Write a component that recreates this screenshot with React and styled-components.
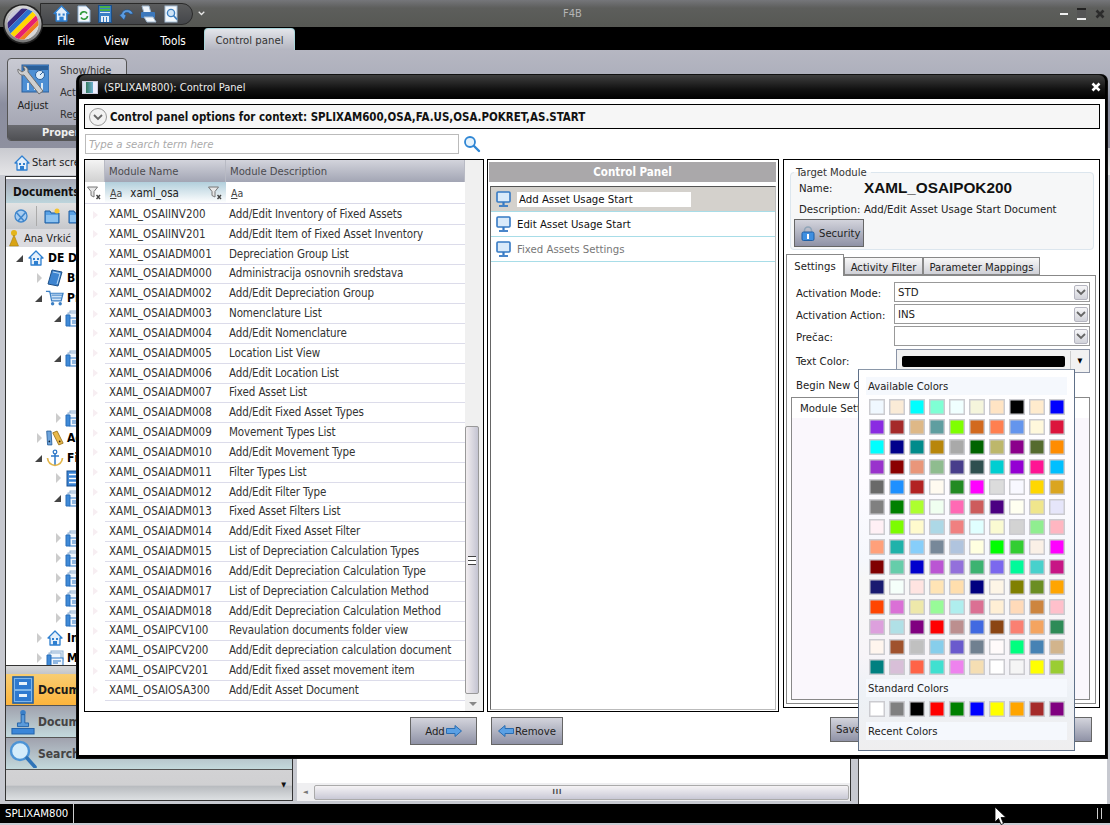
import React from "react";
import styled, { createGlobalStyle } from "styled-components";

const GlobalStyle = createGlobalStyle`
  body {
    margin: 0;
    background: #8e909c;
    font-family: "DejaVu Sans", "Liberation Sans", sans-serif;
    font-stretch: condensed;
    font-size: 11px;
    color: #222;
  }
`;

const MODULES = [
  ["XAML_OSAIINV200", "Add/Edit Inventory of Fixed Assets"],
  ["XAML_OSAIINV201", "Add/Edit Item of Fixed Asset Inventory"],
  ["XAML_OSAIADM001", "Depreciation Group List"],
  ["XAML_OSAIADM000", "Administracija osnovnih sredstava"],
  ["XAML_OSAIADM002", "Add/Edit Depreciation Group"],
  ["XAML_OSAIADM003", "Nomenclature List"],
  ["XAML_OSAIADM004", "Add/Edit Nomenclature"],
  ["XAML_OSAIADM005", "Location List View"],
  ["XAML_OSAIADM006", "Add/Edit Location List"],
  ["XAML_OSAIADM007", "Fixed Asset List"],
  ["XAML_OSAIADM008", "Add/Edit Fixed Asset Types"],
  ["XAML_OSAIADM009", "Movement Types List"],
  ["XAML_OSAIADM010", "Add/Edit Movement Type"],
  ["XAML_OSAIADM011", "Filter Types List"],
  ["XAML_OSAIADM012", "Add/Edit Filter Type"],
  ["XAML_OSAIADM013", "Fixed Asset Filters List"],
  ["XAML_OSAIADM014", "Add/Edit Fixed Asset Filter"],
  ["XAML_OSAIADM015", "List of Depreciation Calculation Types"],
  ["XAML_OSAIADM016", "Add/Edit Depreciation Calculation Type"],
  ["XAML_OSAIADM017", "List of Depreciation Calculation Method"],
  ["XAML_OSAIADM018", "Add/Edit Depreciation Calculation Method"],
  ["XAML_OSAIPCV100", "Revaulation documents folder view"],
  ["XAML_OSAIPCV200", "Add/Edit depreciation calculation document"],
  ["XAML_OSAIPCV201", "Add/Edit fixed asset movement item"],
  ["XAML_OSAIOSA300", "Add/Edit Asset Document"],
];

const AVAILABLE_COLORS = `aliceblue antiquewhite aqua aquamarine azure beige bisque black blanchedalmond blue
blueviolet brown burlywood cadetblue chartreuse chocolate coral cornflowerblue cornsilk crimson
cyan darkblue darkcyan darkgoldenrod darkgray darkgreen darkkhaki darkmagenta darkolivegreen darkorange
darkorchid darkred darksalmon darkseagreen darkslateblue darkslategray darkturquoise darkviolet deeppink deepskyblue
dimgray dodgerblue firebrick floralwhite forestgreen fuchsia gainsboro ghostwhite gold goldenrod
gray green greenyellow honeydew hotpink indianred indigo ivory khaki lavender
lavenderblush lawngreen lemonchiffon lightblue lightcoral lightcyan lightgoldenrodyellow lightgray lightgreen lightpink
lightsalmon lightseagreen lightskyblue lightslategray lightsteelblue lightyellow lime limegreen linen magenta
maroon mediumaquamarine mediumblue mediumorchid mediumpurple mediumseagreen mediumslateblue mediumspringgreen mediumturquoise mediumvioletred
midnightblue mintcream mistyrose moccasin navajowhite navy oldlace olive olivedrab orange
orangered orchid palegoldenrod palegreen paleturquoise palevioletred papayawhip peachpuff peru pink
plum powderblue purple red rosybrown royalblue saddlebrown salmon sandybrown seagreen
seashell sienna silver skyblue slateblue slategray snow springgreen steelblue tan
teal thistle tomato turquoise violet wheat white whitesmoke yellow yellowgreen`.split(/\s+/);

const STANDARD_COLORS = ["white", "gray", "black", "red", "green", "blue", "yellow", "orange", "brown", "purple"];

/* icons */

const Logo = () => (
  <svg width="42" height="42" viewBox="0 0 42 42">
    <defs>
      <clipPath id="logoClip"><circle cx="21" cy="21" r="15.5" /></clipPath>
      <linearGradient id="ring" x1="0" y1="0" x2="0" y2="1">
        <stop offset="0" stopColor="#d8d8d8" /><stop offset="1" stopColor="#777" />
      </linearGradient>
    </defs>
    <circle cx="21" cy="21" r="20" fill="#222" />
    <circle cx="21" cy="21" r="18.5" fill="url(#ring)" />
    <circle cx="21" cy="21" r="15.5" fill="#fff" />
    <g clipPath="url(#logoClip)" transform="rotate(45 21 21)">
      <rect x="3" y="2" width="6" height="38" fill="#c8c8d8" />
      <rect x="9" y="2" width="5" height="38" fill="#3a2a80" />
      <rect x="14" y="2" width="5" height="38" fill="#2b6fd0" />
      <rect x="19" y="2" width="5" height="38" fill="#ffd800" />
      <rect x="24" y="2" width="5" height="38" fill="#e8206e" />
      <rect x="29" y="2" width="4" height="38" fill="#f08020" />
      <rect x="33" y="2" width="6" height="38" fill="#d8d8d8" />
    </g>
  </svg>
);

const HomeIcon = ({ size = 16, base = "#2e7fd0" }) => (
  <svg width={size} height={size} viewBox="0 0 16 16">
    <path d="M8 1 L15 8 L13 8 L13 15 L3 15 L3 8 L1 8 Z" fill="#e4effa" stroke={base} strokeWidth="1.3" strokeLinejoin="round" />
    <rect x="5" y="8" width="2" height="2" fill={base} />
    <rect x="9" y="8" width="2" height="2" fill={base} />
    <rect x="6" y="11" width="4" height="4" fill={base} />
  </svg>
);

const DocRefreshIcon = () => (
  <svg width="16" height="18" viewBox="0 0 16 18">
    <path d="M2 1 H10 L14 5 V17 H2 Z" fill="#f2f7fc" stroke="#8fb0d0" />
    <path d="M4.5 10 A3.5 3.5 0 0 1 11 8.5" fill="none" stroke="#2f9a3c" strokeWidth="1.6" />
    <path d="M11.5 11 A3.5 3.5 0 0 1 5 12.5" fill="none" stroke="#2f9a3c" strokeWidth="1.6" />
  </svg>
);

const SaveIcon = () => (
  <svg width="14" height="18" viewBox="0 0 14 18">
    <rect x="0.5" y="0.5" width="13" height="17" fill="#3b7fc4" stroke="#1d4f86" />
    <rect x="2" y="1" width="10" height="2" fill="#49b04a" />
    <rect x="2" y="4" width="10" height="2" fill="#49b04a" />
    <rect x="2" y="7" width="10" height="1" fill="#dfeaf5" />
    <rect x="3" y="11" width="8" height="6" fill="#e8eef5" />
    <rect x="5" y="12" width="1" height="5" fill="#3b7fc4" />
    <rect x="8" y="12" width="1" height="5" fill="#3b7fc4" />
  </svg>
);

const UndoIcon = () => (
  <svg width="16" height="16" viewBox="0 0 16 16">
    <path d="M6 14 L1.5 9 L3.5 8 A6 6 0 0 1 15 8 L12 8 A3.5 3.5 0 0 0 6 8 L8 9.5 Z" fill="#5b9be0" stroke="#1d4f86" strokeWidth="0.6" />
  </svg>
);

const PrintIcon = () => (
  <svg width="18" height="18" viewBox="0 0 18 18">
    <path d="M2 1 H9 L11 8 H4 Z" fill="#eef4fb" stroke="#a0b8d0" />
    <rect x="1" y="7" width="14" height="6" rx="1" fill="#3c78bc" />
    <path d="M4 12 H13 L16 17 H7 Z" fill="#f3f7fb" stroke="#a0b8d0" />
  </svg>
);

const PreviewIcon = () => (
  <svg width="15" height="18" viewBox="0 0 15 18">
    <rect x="1" y="1" width="12" height="16" fill="#f2f7fc" stroke="#a8c0d8" />
    <circle cx="7" cy="8" r="3.6" fill="#cfe4f7" stroke="#3f80c0" strokeWidth="1.4" />
    <path d="M9.5 10.5 L13 14.5" stroke="#3f80c0" strokeWidth="1.8" />
  </svg>
);

const WindowX = ({ color, size = 10 }) => (
  <svg width={size} height={size} viewBox="0 0 10 10">
    <path d="M1.5 1.5 L8.5 8.5 M8.5 1.5 L1.5 8.5" stroke={color} strokeWidth="2.6" />
  </svg>
);

const AdjustIcon = () => (
  <svg width="32" height="32" viewBox="0 0 32 32">
    <rect x="5" y="1" width="27" height="27" fill="#4d8fd4" stroke="#2a5f9c" />
    <rect x="6" y="2" width="25" height="4" fill="#2b5f98" />
    <circle cx="23" cy="11" r="4.5" fill="#dcebf8" stroke="#2a5f9c" />
    <path d="M23 11 L26 8" stroke="#2a5f9c" />
    <path d="M11 19 V26 M18 19 V26 M25 19 V26" stroke="#dcebf8" strokeWidth="2" />
    <path d="M1 5 A5 5 0 0 0 7 11 L22 30 L26 27 L11 8 A5 5 0 0 0 6 2 L8 6 L5 8 Z" fill="#cfcfcf" stroke="#6f6f6f" />
  </svg>
);

const RefreshGlobe = () => (
  <svg width="16" height="18" viewBox="0 0 16 18">
    <circle cx="8" cy="9" r="6" fill="#a9cdf0" stroke="#3f86cc" strokeWidth="1.3" />
    <path d="M3 5 L11 14 M5 14 L13 5" stroke="#3f86cc" strokeWidth="1.6" />
  </svg>
);

const FolderStar = ({ star = "#f5c431" }) => (
  <svg width="17" height="16" viewBox="0 0 17 16">
    <path d="M1 3 H6 L7 5 H15 V15 H1 Z" fill="#59a2e6" stroke="#1c5a9e" />
    <rect x="2" y="7" width="12" height="7" fill="#8cc2f0" />
    <circle cx="13" cy="3" r="2.5" fill={star} />
  </svg>
);

const PersonIcon = () => (
  <svg width="10" height="17" viewBox="0 0 10 17">
    <circle cx="5" cy="3" r="3" fill="#e4b51c" />
    <path d="M5 5 L9.5 16 L0.5 16 Z" fill="#d9a414" stroke="#9a7409" strokeWidth="0.5" />
  </svg>
);

const BookIcon = () => (
  <svg width="18" height="18" viewBox="0 0 18 18">
    <path d="M6 1 L16 3 L12 17 L2 15 Z" fill="#3d84d0" stroke="#1d4f86" />
    <path d="M7 3 L14 4.5 L11 15" fill="none" stroke="#bcdcf7" />
  </svg>
);

const CartIcon = () => (
  <svg width="20" height="18" viewBox="0 0 20 18">
    <path d="M1 2 H5 L7 12 H17 L19 4 H5" fill="#cfe3f6" stroke="#3b7fc4" strokeWidth="1.3" />
    <path d="M7 6 H18 M7.5 9 H17.5" stroke="#3b7fc4" />
    <circle cx="8" cy="15" r="1.8" fill="#3b7fc4" />
    <circle cx="16" cy="15" r="1.8" fill="#3b7fc4" />
  </svg>
);

const StackIcon = () => (
  <svg width="18" height="17" viewBox="0 0 18 17">
    <rect x="5" y="1" width="12" height="9" fill="#e6eff8" stroke="#8fb0d2" />
    <rect x="3" y="3" width="12" height="9" fill="#f0f6fc" stroke="#8fb0d2" />
    <path d="M1 5 H5 V16 H1 Z" fill="#3f8ad8" stroke="#2b6fb8" />
    <rect x="5" y="8" width="12" height="8" fill="#f2f7fc" stroke="#2e78c8" />
    <path d="M7 11 H15 M7 13 H12" stroke="#2e78c8" />
  </svg>
);

const BindersIcon = () => (
  <svg width="22" height="18" viewBox="0 0 22 18">
    <path d="M2 1 H7 L8 17 H3 Z" fill="#6ea4dc" stroke="#28609c" />
    <path d="M9 3 L14 1 L21 15 L16 17 Z" fill="#e9b94a" stroke="#99721b" />
    <circle cx="5" cy="13" r="1" fill="#123" />
    <circle cx="17" cy="13" r="1" fill="#321" />
  </svg>
);

const AnchorIcon = () => (
  <svg width="18" height="18" viewBox="0 0 18 18">
    <circle cx="9" cy="3" r="1.8" fill="none" stroke="#2e78c8" strokeWidth="1.3" />
    <path d="M9 5 V16 M5 7 H13" stroke="#2e78c8" strokeWidth="1.5" />
    <path d="M1.5 9 C2 14 6 16 9 16.5 C12 16 16 14 16.5 9" fill="none" stroke="#e3b64b" strokeWidth="1.7" />
  </svg>
);

const ListIcon = () => (
  <svg width="16" height="17" viewBox="0 0 16 17">
    <rect x="1" y="1" width="14" height="15" fill="#3b84d4" stroke="#1d5596" />
    <path d="M3 4.5 H13 M3 8.5 H13 M3 12.5 H13" stroke="#fff" strokeWidth="1.6" />
  </svg>
);

const CabinetIcon = () => (
  <svg width="22" height="28" viewBox="0 0 22 28">
    <rect x="1" y="1" width="20" height="26" fill="#7fb6ea" stroke="#1f5fa6" strokeWidth="1.6" />
    <rect x="3" y="3" width="16" height="10" fill="#2f7ad0" />
    <rect x="3" y="15" width="16" height="10" fill="#2f7ad0" />
    <rect x="7" y="6" width="8" height="3" fill="#e8f2fb" />
    <rect x="7" y="18" width="8" height="3" fill="#e8f2fb" />
  </svg>
);

const StampIcon = () => (
  <svg width="24" height="28" viewBox="0 0 26 28">
    <circle cx="13" cy="4" r="3" fill="#3a7fc8" />
    <path d="M11 6 H15 L15 15 H19 V19 H7 V15 H11 Z" fill="#5a9ada" stroke="#1f5fa6" />
    <rect x="1" y="21" width="24" height="6" fill="#3a86d8" stroke="#1f5fa6" />
  </svg>
);

const BigLens = () => (
  <svg width="28" height="28" viewBox="0 0 28 28">
    <circle cx="11" cy="11" r="9" fill="#d4ecfb" stroke="#4d94d6" strokeWidth="2.4" />
    <path d="M18 18 L26 27" stroke="#2f74b8" strokeWidth="3.6" strokeLinecap="round" />
  </svg>
);

const SmallLens = () => (
  <svg width="18" height="18" viewBox="0 0 18 18">
    <circle cx="7" cy="7" r="5" fill="#e6f3fc" stroke="#2f86d4" strokeWidth="1.8" />
    <path d="M11 11 L16 16" stroke="#2f86d4" strokeWidth="2.4" strokeLinecap="round" />
  </svg>
);

const FilterIcon = () => (
  <svg width="14" height="14" viewBox="0 0 14 14">
    <path d="M0.5 1 H10.5 L7 5.5 V11 L4 9.5 V5.5 Z" fill="#e8e8e8" stroke="#777" />
    <path d="M9.5 9 L13 13 M13 9 L9.5 13" stroke="#444" strokeWidth="1.4" />
  </svg>
);

const MonitorIcon = () => (
  <svg width="16" height="17" viewBox="0 0 16 17">
    <rect x="1" y="1" width="13" height="10" rx="1" fill="#d9eafa" stroke="#3579c4" strokeWidth="1.6" />
    <path d="M7.5 11 V14" stroke="#3579c4" strokeWidth="2.2" />
    <path d="M3 15 H12" stroke="#3579c4" strokeWidth="1.8" />
  </svg>
);

const LockIcon = () => (
  <svg width="14" height="15" viewBox="0 0 14 15">
    <path d="M3.5 7 V4.5 A3.5 3.5 0 0 1 10.5 4.5 V7" fill="none" stroke="#8fa4b8" strokeWidth="1.6" />
    <rect x="1" y="6" width="12" height="8.5" rx="1.5" fill="#3f8fe0" stroke="#1f5fa6" />
    <rect x="6" y="8" width="2" height="5" fill="#fff" />
  </svg>
);

const BlueArrow = ({ left }) => (
  <svg width="16" height="12" viewBox="0 0 16 12">
    <path
      d={left ? "M15.5 3.5 H7 V0.5 L0.5 6 L7 11.5 V8.5 H15.5 Z" : "M0.5 3.5 H9 V0.5 L15.5 6 L9 11.5 V8.5 H0.5 Z"}
      fill="#5aa0e4"
      stroke="#2a6cb0"
    />
  </svg>
);

const Chevron = ({ color = "#666", size = 10 }) => (
  <svg width={size} height={size * 0.7} viewBox="0 0 10 7">
    <path d="M1 1 L5 5 L9 1" fill="none" stroke={color} strokeWidth="1.8" />
  </svg>
);

const Cursor = () => (
  <svg width="13" height="20" viewBox="0 0 13 20">
    <path d="M1 1 V16 L4.5 12.5 L7 18.5 L9.5 17.5 L7 11.5 L12 11.5 Z" fill="#fff" stroke="#000" strokeWidth="0.8" />
  </svg>
);

/* shell */

const Page = styled.div`
  position: relative;
  width: 1110px;
  height: 825px;
  overflow: hidden;
  display: flex;
  flex-direction: column;
  background: #c9cbd2;
`;

const TitleBar = styled.div`
  height: 27px;
  flex: none;
  display: flex;
  align-items: center;
  background: linear-gradient(#75767a 0, #5d5e5c 30%, #565853 100%);
  position: relative;
`;

const LogoSlot = styled.div`
  position: absolute;
  left: 2px;
  top: 3px;
  z-index: 2;
  display: flex;
`;

const QuickBar = styled.div`
  margin-left: 40px;
  width: 153px;
  height: 22px;
  box-sizing: border-box;
  padding-left: 12px;
  display: flex;
  align-items: center;
  gap: 6px;
  background: linear-gradient(#5b5c5d, #44464a);
  border: 1px solid #2a2a2a;
  border-radius: 0 12px 12px 0;
`;

const QuickMore = styled.span`
  margin-left: 5px;
  display: flex;
`;

const AppName = styled.div`
  flex: 1;
  text-align: center;
  color: #b5b5b5;
  font-size: 11px;
  padding-right: 120px;
`;

const WindowButtons = styled.div`
  display: flex;
  align-items: center;
  gap: 9px;
  padding-right: 5px;
`;

const MinGlyph = styled.span`
  width: 8px;
  height: 2px;
  background: #f0f0f0;
`;

const MaxGlyph = styled.span`
  width: 9px;
  height: 8px;
  border-top: 2px solid #222;
  border-bottom: 2px solid #eee;
  background: #555;
`;

const MenuStrip = styled.div`
  height: 23px;
  flex: none;
  display: flex;
  align-items: flex-end;
  background: #000;
  padding-left: 42px;
`;

const MenuItem = styled.div`
  width: ${(p) => p.$w}px;
  height: 21px;
  line-height: 24px;
  text-align: center;
  color: #fff;
  font-size: 11.7px;
`;

const ActiveMenuItem = styled.div`
  width: 91px;
  height: 22px;
  margin-left: 1px;
  box-sizing: border-box;
  line-height: 23px;
  text-align: center;
  color: #333;
  font-size: 11.3px;
  border: 1px solid #a8d5da;
  border-bottom: 0;
  border-radius: 4px 4px 0 0;
  background: linear-gradient(#e3e5ea, #b3b5c0);
`;

const Ribbon = styled.div`
  height: 98px;
  flex: none;
  padding: 8px 0 0 7px;
  box-sizing: border-box;
  background: linear-gradient(#b6b7c2 0, #acaebb 30%, #8b8e9f 55%, #8e909f 100%);
`;

const RibbonGroup = styled.div`
  width: 120px;
  height: 83px;
  box-sizing: border-box;
  border: 1px solid #555;
  border-radius: 4px;
  display: flex;
  flex-direction: column;
  overflow: hidden;
  background: linear-gradient(#c9cad3, #9ea0ae);
`;

const RibbonBody = styled.div`
  flex: 1;
  display: flex;
  padding: 3px 0 0 9px;
  gap: 11px;
`;

const AdjustButton = styled.div`
  display: flex;
  flex-direction: column;
  align-items: center;
  gap: 3px;
  padding-top: 2px;
  font-size: 11px;
  color: #222;
`;

const RibbonLinks = styled.div`
  display: flex;
  flex-direction: column;
  gap: 8px;
  padding-top: 2px;
  font-size: 11px;
  line-height: 14px;
  color: #333;
`;

const RibbonLabel = styled.div`
  height: 15px;
  line-height: 15px;
  padding-left: 34px;
  color: #eee;
  font-weight: bold;
  font-size: 11px;
  background: linear-gradient(#6a6b70, #4f5054);
`;

const DocTabs = styled.div`
  height: 27px;
  flex: none;
  display: flex;
  align-items: center;
  padding: 2px 0 0 14px;
  box-sizing: border-box;
  gap: 2px;
  font-size: 11px;
  color: #222;
  background: linear-gradient(#c9cad0, #e5e5e7);
`;

const Workspace = styled.div`
  flex: 1;
  min-height: 0;
  display: flex;
  background: #c7c9d0;
`;

const Dock = styled.div`
  width: 288px;
  margin: 1px 0 3px 5px;
  flex: none;
  display: flex;
  flex-direction: column;
  background: #fff;
  border: 1px solid #333;
  box-sizing: border-box;
`;

const DockHeader = styled.div`
  height: 24px;
  margin-top: 2px;
  padding-left: 7px;
  line-height: 27px;
  flex: none;
  font-weight: bold;
  font-size: 11.7px;
  color: #111;
  background: linear-gradient(#a7a9b6, #bdd5dc);
`;

const DockTools = styled.div`
  height: 26px;
  flex: none;
  display: flex;
  align-items: center;
  padding-left: 7px;
  gap: 7px;
  background: linear-gradient(#e3e3e3, #c6c8cc);
`;

const ToolDivider = styled.span`
  width: 1px;
  height: 20px;
  background: #aaa;
`;

const UserRow = styled.div`
  height: 18px;
  flex: none;
  display: flex;
  align-items: center;
  gap: 5px;
  padding-left: 3px;
  font-size: 11px;
  color: #222;
  background: #dcdce0;
`;

const Tree = styled.div`
  flex: 1;
  padding-top: 1px;
  display: flex;
  flex-direction: column;
  overflow: hidden;
`;

const TreeRowBox = styled.div`
  height: 20px;
  flex: none;
  display: flex;
  align-items: center;
  gap: 3px;
  padding-left: ${(p) => 10 + p.$level * 19}px;
  font-weight: bold;
  font-size: 12px;
  color: #000;
  white-space: nowrap;
`;

const ExpandMark = styled.span`
  width: 0;
  height: 0;
  flex: none;
  border-style: solid;
  ${(p) =>
    p.$open
      ? `border-width: 0 0 7px 7px; border-color: transparent transparent #444 transparent;`
      : `border-width: 5px 0 5px 5px; border-color: transparent transparent transparent #ccc; margin-left: 2px;`}
`;

const IconSlot = styled.span`
  width: 19px;
  flex: none;
  display: flex;
  justify-content: center;
`;

const DockSplitter = styled.div`
  height: 9px;
  flex: none;
  background: linear-gradient(#d8d8d8, #c3c5c9);
  border-top: 1px solid #333;
  box-sizing: border-box;
`;

const NavButton = styled.div`
  height: 32px;
  flex: none;
  display: flex;
  align-items: center;
  gap: 1px;
  padding-left: 3px;
  box-sizing: border-box;
  border-bottom: 1px solid #555;
  font-size: 12px;
  font-weight: bold;
  color: ${(p) => (p.$active ? "#1a1a1a" : "#444")};
  background: ${(p) =>
    p.$active
      ? "linear-gradient(#f8cd72, #fdb43c)"
      : "linear-gradient(#a0a2ae, #c3d9dc)"};
`;

const NavIcon = styled.span`
  width: 28px;
  display: flex;
  justify-content: center;
`;

const DockFooter = styled.div`
  height: 30px;
  flex: none;
  display: flex;
  justify-content: flex-end;
  align-items: center;
  padding-right: 6px;
  font-size: 7px;
  color: #111;
  background: linear-gradient(#d2d2d4 0, #d0d0d2 50%, #b9bcc0 55%, #dde0e2 100%);
`;

const DocArea = styled.div`
  width: 553px;
  margin: 1px 0 3px 4px;
  flex: none;
  display: flex;
  flex-direction: column;
  justify-content: flex-end;
  background: #fff;
  border-right: 1px solid #333;
`;

const HScroll = styled.div`
  height: 18px;
  display: flex;
  align-items: center;
  padding-left: 6px;
  background: #efeff1;
  font-size: 7px;
  color: #777;
`;

const HThumb = styled.div`
  flex: 1;
  margin: 0 1px 0 6px;
  height: 13px;
  padding-right: 48px;
  text-align: center;
  line-height: 13px;
  letter-spacing: 1px;
  font-weight: bold;
  color: #444;
  border: 1px solid #aaa;
  border-radius: 2px;
  background: linear-gradient(#f5f3f5, #c9c9d6);
`;

const SideWhite = styled.div`
  flex: 1;
  margin: 1px 3px 0 7px;
  background: #fff;
  border-left: 1px solid #444;
`;

const StatusBar = styled.div`
  height: 19px;
  flex: none;
  margin-bottom: 2px;
  display: flex;
  align-items: center;
  justify-content: space-between;
  background: #000;
  color: #fff;
  font-size: 11.3px;
`;

const StatusCell = styled.div`
  height: 19px;
  line-height: 19px;
  padding: 0 5px;
  border-right: 1px solid #ccc;
`;

const Grip = styled.div`
  width: 3px;
  height: 11px;
  margin-right: 8px;
  border-left: 1px solid #ccc;
  border-right: 1px solid #ccc;
`;

const CursorSlot = styled.div`
  position: absolute;
  left: 994px;
  top: 806px;
  z-index: 9;
  display: flex;
`;

/* modal */

const Modal = styled.div`
  position: absolute;
  left: 77px;
  top: 75px;
  width: 1030px;
  height: 683px;
  box-sizing: border-box;
  padding: 0 2px 3px;
  display: flex;
  flex-direction: column;
  border-radius: 6px 6px 0 0;
  background: #000;
  box-shadow: 0 0 0 1px #111;
`;

const ModalTitle = styled.div`
  height: 24px;
  flex: none;
  display: flex;
  align-items: center;
  gap: 6px;
  padding: 0 4px 0 3px;
  color: #eee;
  font-size: 11px;
  border-radius: 6px 6px 0 0;
  background: linear-gradient(#3f3f3f, #111 60%, #000);
`;

const TitleGlyph = styled.span`
  width: 14px;
  height: 11px;
  background: linear-gradient(90deg, #d8e4f0 20%, #33785c 20%, #6fb0d0 70%, #eef 70%);
  border: 1px solid #ccd;
`;

const ModalClose = styled.span`
  margin-left: auto;
  display: flex;
`;

const ModalBody = styled.div`
  position: relative;
  flex: 1;
  min-height: 0;
  display: flex;
  flex-direction: column;
  padding: 5px 5px 0;
  background: #fff;
`;

const ContextBar = styled.div`
  height: 25px;
  flex: none;
  box-sizing: border-box;
  display: flex;
  align-items: center;
  gap: 3px;
  padding: 1px 0 0 4px;
  border: 1px solid #000;
  background: #f6f6f6;
  font-weight: bold;
  font-size: 11.45px;
  color: #111;
`;

const RoundToggle = styled.span`
  width: 18px;
  height: 18px;
  box-sizing: border-box;
  display: flex;
  align-items: center;
  justify-content: center;
  border: 1px solid #999;
  border-radius: 50%;
  background: #f2f2f2;
`;

const SearchRow = styled.div`
  height: 20px;
  flex: none;
  margin: 5px 0;
  display: flex;
  align-items: center;
  gap: 4px;
`;

const SearchInput = styled.div`
  width: 374px;
  height: 20px;
  margin-left: 1px;
  box-sizing: border-box;
  padding-left: 3px;
  line-height: 19px;
  border: 1px solid #bbb;
  color: #aaa;
  font-style: italic;
  font-size: 11.3px;
`;

const Panels = styled.div`
  height: 553px;
  flex: none;
  display: flex;
  align-items: flex-start;
  gap: 3px;
`;

const ModulePanel = styled.div`
  width: 400px;
  height: 553px;
  box-sizing: border-box;
  border: 1px solid #000;
  display: flex;
`;

const GridColumn = styled.div`
  flex: 1;
  min-width: 0;
  display: flex;
  flex-direction: column;
`;

const GridHeader = styled.div`
  display: grid;
  grid-template-columns: 20px 121px 1fr;
  height: 22px;
  flex: none;
  color: #4b4b4f;
  font-size: 11.2px;
`;

const HeaderCell = styled.div`
  padding-left: 4px;
  line-height: 23px;
  border-right: 1px solid #b8bac4;
  background: ${(p) =>
    p.$blank
      ? "linear-gradient(#f4f4f4, #cfcfcf)"
      : "linear-gradient(#d3d4dc, #a0a3b2)"};
`;

const FilterRow = styled.div`
  display: grid;
  grid-template-columns: 20px 121px 1fr;
  height: 22px;
  flex: none;
  border-bottom: 1px solid #d9d9e8;
  box-sizing: border-box;
`;

const FilterCell = styled.div`
  display: flex;
  align-items: center;
  gap: 8px;
  padding-left: ${(p) => p.$pad}px;
  color: #222;
  font-size: 11.5px;
  background: ${(p) => (p.$tinted ? "linear-gradient(#b2cfdc, #fff)" : "#fff")};
`;

const FilterAa = styled.span`
  font-size: 10.5px;
  color: #444;
  &::first-letter {
    text-decoration: underline;
  }
`;

const PushRight = styled.span`
  margin-left: auto;
  margin-right: 4px;
  display: flex;
`;

const GridRow = styled.div`
  display: grid;
  grid-template-columns: 20px 121px 1fr;
  height: 19.83px;
  flex: none;
  font-size: 11.5px;
  color: #333;
`;

const RowMarker = styled.div`
  display: flex;
  align-items: center;
  padding-left: 8px;
  &::before {
    content: "";
    border-style: solid;
    border-width: 4px 0 4px 5px;
    border-color: transparent transparent transparent #f7eef2;
  }
`;

const RowCell = styled.div`
  line-height: 20px;
  white-space: nowrap;
  border-bottom: 1px solid #dcdcea;
  padding-left: ${(p) => p.$pad}px;
  letter-spacing: ${(p) => p.$track || 0}px;
`;

const VScroll = styled.div`
  width: 18px;
  flex: none;
  display: flex;
  flex-direction: column;
  align-items: flex-start;
  justify-content: flex-end;
  background: #f0f0f0;
  padding-bottom: 17px;
  box-sizing: border-box;
  position: relative;
`;

const VThumb = styled.div`
  width: 14px;
  height: 268px;
  display: flex;
  align-items: center;
  justify-content: center;
  box-sizing: border-box;
  border: 1px solid #999;
  border-radius: 2px;
  background: linear-gradient(90deg, #f2eef0, #c4c4d2);
`;

const GripLines = styled.span`
  width: 8px;
  height: 7px;
  border-top: 1px solid #444;
  border-bottom: 1px solid #444;
  background: linear-gradient(#fff 40%, #444 40%, #444 60%, #fff 60%);
`;

const ScrollDown = styled.span`
  position: absolute;
  left: 4px;
  bottom: 5px;
  width: 0;
  height: 0;
  border-style: solid;
  border-width: 4px 4px 0 4px;
  border-color: #888 transparent transparent transparent;
`;

const MiddlePanel = styled.div`
  width: 292px;
  height: 553px;
  box-sizing: border-box;
  border: 1px solid #000;
  padding: 2px 2px 1px 1px;
  display: flex;
  flex-direction: column;
`;

const MiddleTitle = styled.div`
  height: 20px;
  flex: none;
  line-height: 20px;
  text-align: center;
  font-weight: bold;
  font-size: 11.5px;
  color: #fff;
  background: #aaa8aa;
`;

const ActionList = styled.div`
  flex: 1;
  margin: 4px 0 0 1px;
  border-left: 1px solid #666;
  border-top: 1px solid #555;
  border-right: 1px solid #bbb;
  border-bottom: 1px solid #bbb;
`;

const ActionRow = styled.div`
  height: 24.9px;
  box-sizing: border-box;
  display: flex;
  align-items: center;
  gap: 5px;
  padding: 1px 0 0 5px;
  font-size: 11.3px;
  border-bottom: 1px solid #a8dde8;
  color: ${(p) => (p.$muted ? "#777" : "#111")};
  background: ${(p) => (p.$selected ? "#d4d1cc" : "#fff")};
`;

const ActionEdit = styled.div`
  width: 174px;
  height: 15px;
  line-height: 15px;
  padding-left: 2px;
  background: #fff;
  box-sizing: border-box;
`;

const TargetPanel = styled.div`
  width: 317px;
  height: 549px;
  margin-left: 1px;
  box-sizing: border-box;
  border: 1px solid #000;
  padding: 6px 3px 3px 2px;
  display: flex;
  flex-direction: column;
`;

const TargetBox = styled.fieldset`
  margin: 0 2px 0 4px;
  padding: 0 4px 0 3px;
  height: 84px;
  box-sizing: border-box;
  flex: none;
  min-width: 0;
  border: 1px solid #dce6ee;
  border-radius: 4px;
  background: #f6f7f8;
  font-size: 11.3px;
  color: #222;
`;

const Legend = styled.legend`
  padding: 0 4px 0 2px;
  font-size: 11.2px;
  color: #333;
`;

const NameRow = styled.div`
  display: flex;
  align-items: center;
  height: ${(p) => p.$h}px;
  padding-left: 5px;
  white-space: nowrap;
`;

const NameLabel = styled.span`
  width: 65px;
  flex: none;
`;

const NameValue = styled.span`
  font-family: "Liberation Sans", sans-serif;
  font-size: 15.3px;
  font-weight: bold;
  color: #111;
`;

const SecurityButton = styled.div`
  width: 70px;
  height: 28px;
  margin-top: -2px;
  box-sizing: border-box;
  display: flex;
  align-items: center;
  gap: 4px;
  padding-left: 6px;
  font-size: 11.2px;
  border: 1px solid #666;
  background: linear-gradient(#d3d4dc, #8f92a6);
`;

const TabStrip = styled.div`
  display: flex;
  align-items: flex-end;
  height: 22px;
  flex: none;
  margin-top: 3px;
  position: relative;
  z-index: 1;
`;

const Tab = styled.div`
  height: ${(p) => (p.$active ? 22 : 18)}px;
  line-height: ${(p) => (p.$active ? 23 : 19)}px;
  width: ${(p) => p.$w}px;
  margin-bottom: ${(p) => (p.$active ? -1 : 0)}px;
  box-sizing: border-box;
  text-align: center;
  font-size: 11.2px;
  color: #222;
  border: 1px solid #888;
  border-bottom: ${(p) => (p.$active ? "0" : "1px solid #888")};
  background: ${(p) => (p.$active ? "#fff" : "linear-gradient(#f8f8f8, #cfd0d6)")};
`;

const TabPanel = styled.div`
  flex: 1;
  min-height: 0;
  box-sizing: border-box;
  padding: 6px 5px 3px 4px;
  border: 1px solid #888;
  display: flex;
  flex-direction: column;
`;

const FieldGrid = styled.div`
  display: grid;
  grid-template-columns: 98px 1fr;
  row-gap: 2px;
  padding-left: 5px;
  font-size: 11.3px;
  color: #222;
  align-items: center;
`;

const FieldLabel = styled.span`
  padding-top: 2px;
`;

const ComboBox = styled.div`
  height: 20px;
  box-sizing: border-box;
  display: flex;
  align-items: center;
  padding: 1px 1px 0 3px;
  border: 1px solid #999;
  background: #fff;
`;

const ComboArrow = styled.span`
  width: 14px;
  height: 15px;
  margin-left: auto;
  display: flex;
  align-items: center;
  justify-content: center;
  box-sizing: border-box;
  border: 1px solid #b5b5c0;
  border-radius: 2px;
  background: linear-gradient(#f6f6f8, #d2d3da);
`;

const ColorPick = styled.div`
  height: 24px;
  margin: 1px 0 0 2px;
  box-sizing: border-box;
  display: flex;
  align-items: center;
  padding-left: 5px;
  border: 1px solid #8a93a6;
  background: #f2f2f2;
`;

const ColorSwatchBar = styled.span`
  flex: 1;
  height: 11px;
  background: ${(p) => p.$color};
  border-radius: 2px;
`;

const ColorDrop = styled.span`
  width: 18px;
  text-align: center;
  font-size: 7px;
  color: #000;
  margin-left: 5px;
  border-left: 1px solid #ccc;
  line-height: 20px;
`;

const SpanRow = styled.div`
  height: 24px;
  line-height: 25px;
  padding-left: 5px;
  font-size: 11.3px;
  color: #222;
  flex: none;
`;

const SettingsGroup = styled.div`
  flex: 1;
  box-sizing: border-box;
  border: 1px solid #888;
  padding: 4px 8px;
  font-size: 11.3px;
  background: linear-gradient(#fff 20px, #faf7fc 20px);
  color: #222;
`;

const ModalButtons = styled.div`
  height: 28px;
  flex: none;
  margin-top: 5px;
  display: flex;
  align-items: flex-start;
  padding-left: 326px;
`;

const ActionButton = styled.div`
  width: ${(p) => p.$w}px;
  height: ${(p) => p.$h}px;
  margin-left: ${(p) => p.$gap}px;
  box-sizing: border-box;
  display: flex;
  align-items: center;
  justify-content: ${(p) => (p.$start ? "flex-start" : "center")};
  padding-left: ${(p) => (p.$start ? 5 : 0)}px;
  gap: 1px;
  font-size: 11.3px;
  color: #222;
  border: 1px solid #666;
  background: linear-gradient(#d3d4dc, #8f92a6);
`;

/* colour popup */

const ColorPopup = styled.div`
  position: absolute;
  left: 779px;
  top: 270px;
  width: 217px;
  height: 382px;
  box-sizing: border-box;
  padding: 7px 7px 0;
  z-index: 5;
  border: 1px solid #5f7088;
  border-top-color: #8a97a8;
  background: linear-gradient(#fff 0, #fdfbff 30%, #f5f7fc 50%, #f7f7f7 55%, #f7f4f8 75%, #edf1f6 85%, #efeeef 100%);
`;

const PopupHeading = styled.div`
  height: 18px;
  margin-top: ${(p) => p.$mt || 0}px;
  line-height: 19px;
  padding-left: 2px;
  font-size: 11.2px;
  color: #222;
  background: #f5f8fd;
`;

const SwatchGrid = styled.div`
  display: grid;
  grid-template-columns: repeat(10, 16px);
  grid-auto-rows: 16px;
  gap: 4px;
  padding: 4px 3px 4px 3px;
`;

const Swatch = styled.span`
  box-sizing: border-box;
  border: 1px solid #cbcbd0;
  box-shadow: inset 0 0 0 0.5px #cbcbd0;
  background: ${(p) => p.$color};
`;

const TREE = [
  { level: 0, open: true, icon: <HomeIcon />, label: "DE D" },
  { level: 1, icon: <BookIcon />, label: "Bu" },
  { level: 1, open: true, icon: <CartIcon />, label: "Pr" },
  { level: 2, open: true, icon: <StackIcon /> },
  {},
  { level: 2, open: true, icon: <StackIcon /> },
  {},
  {},
  { level: 2, icon: <StackIcon /> },
  { level: 1, icon: <BindersIcon />, label: "Ad" },
  { level: 1, open: true, icon: <AnchorIcon />, label: "Fi" },
  { level: 2, icon: <ListIcon /> },
  { level: 2, open: true, icon: <StackIcon /> },
  {},
  { level: 2, icon: <StackIcon /> },
  { level: 2, icon: <StackIcon /> },
  { level: 2, icon: <StackIcon /> },
  { level: 2, icon: <StackIcon /> },
  { level: 2, icon: <StackIcon /> },
  { level: 1, icon: <HomeIcon />, label: "In" },
  { level: 1, icon: <StackIcon />, label: "M" },
];

function TreeRow({ row }) {
  if (!row.icon) return <TreeRowBox $level={0} />;
  return (
    <TreeRowBox $level={row.level}>
      <ExpandMark $open={row.open} />
      <IconSlot>{row.icon}</IconSlot>
      {row.label}
    </TreeRowBox>
  );
}

function Combo({ value }) {
  return (
    <ComboBox>
      {value}
      <ComboArrow>
        <Chevron />
      </ComboArrow>
    </ComboBox>
  );
}

export default function App() {
  return (
    <Page>
      <GlobalStyle />
      <TitleBar>
        <LogoSlot>
          <Logo />
        </LogoSlot>
        <QuickBar>
          <HomeIcon size={17} />
          <DocRefreshIcon />
          <SaveIcon />
          <UndoIcon />
          <PrintIcon />
          <PreviewIcon />
        </QuickBar>
        <QuickMore>
          <Chevron color="#e8e8e8" size={7} />
        </QuickMore>
        <AppName>F4B</AppName>
        <WindowButtons>
          <MinGlyph />
          <MaxGlyph />
          <WindowX color="#2c2c2c" />
        </WindowButtons>
      </TitleBar>
      <MenuStrip>
        <MenuItem $w={48}>File</MenuItem>
        <MenuItem $w={53}>View</MenuItem>
        <MenuItem $w={60}>Tools</MenuItem>
        <ActiveMenuItem>Control panel</ActiveMenuItem>
      </MenuStrip>
      <Ribbon>
        <RibbonGroup>
          <RibbonBody>
            <AdjustButton>
              <AdjustIcon />
              Adjust
            </AdjustButton>
            <RibbonLinks>
              <span>Show/hide</span>
              <span>Act</span>
              <span>Reg</span>
            </RibbonLinks>
          </RibbonBody>
          <RibbonLabel>Proper</RibbonLabel>
        </RibbonGroup>
      </Ribbon>
      <DocTabs>
        <HomeIcon />
        Start scre
      </DocTabs>
      <Workspace>
        <Dock>
          <DockHeader>Documents</DockHeader>
          <DockTools>
            <RefreshGlobe />
            <ToolDivider />
            <FolderStar />
            <FolderStar star="#7fb6ea" />
          </DockTools>
          <UserRow>
            <PersonIcon />
            Ana Vrkić
          </UserRow>
          <Tree>
            {TREE.map((row, i) => (
              <TreeRow key={i} row={row} />
            ))}
          </Tree>
          <DockSplitter />
          <NavButton $active>
            <NavIcon>
              <CabinetIcon />
            </NavIcon>
            Docum
          </NavButton>
          <NavButton>
            <NavIcon>
              <StampIcon />
            </NavIcon>
            Docum
          </NavButton>
          <NavButton>
            <NavIcon>
              <BigLens />
            </NavIcon>
            Search
          </NavButton>
          <DockFooter>▼</DockFooter>
        </Dock>
        <DocArea>
          <HScroll>
            ◄
            <HThumb>III</HThumb>
          </HScroll>
        </DocArea>
        <SideWhite />
      </Workspace>
      <StatusBar>
        <StatusCell>SPLIXAM800</StatusCell>
        <Grip />
      </StatusBar>
      <CursorSlot>
        <Cursor />
      </CursorSlot>

      <Modal>
        <ModalTitle>
          <TitleGlyph />
          (SPLIXAM800): Control Panel
          <ModalClose>
            <WindowX color="#fff" />
          </ModalClose>
        </ModalTitle>
        <ModalBody>
          <ContextBar>
            <RoundToggle>
              <Chevron />
            </RoundToggle>
            Control panel options for context: SPLIXAM600,OSA,FA.US,OSA.POKRET,AS.START
          </ContextBar>
          <SearchRow>
            <SearchInput>Type a search term here</SearchInput>
            <SmallLens />
          </SearchRow>
          <Panels>
            <ModulePanel>
              <GridColumn>
                <GridHeader>
                  <HeaderCell $blank />
                  <HeaderCell>Module Name</HeaderCell>
                  <HeaderCell>Module Description</HeaderCell>
                </GridHeader>
                <FilterRow>
                  <FilterCell $pad={2}>
                    <FilterIcon />
                  </FilterCell>
                  <FilterCell $tinted $pad={5}>
                    <FilterAa>Aa</FilterAa>
                    xaml_osa
                    <PushRight>
                      <FilterIcon />
                    </PushRight>
                  </FilterCell>
                  <FilterCell $pad={5}>
                    <FilterAa>Aa</FilterAa>
                  </FilterCell>
                </FilterRow>
                {MODULES.map(([name, description]) => (
                  <GridRow key={name}>
                    <RowMarker />
                    <RowCell $pad={4}>{name}</RowCell>
                    <RowCell $pad={3} $track={-0.1}>{description}</RowCell>
                  </GridRow>
                ))}
              </GridColumn>
              <VScroll>
                <VThumb>
                  <GripLines />
                </VThumb>
                <ScrollDown />
              </VScroll>
            </ModulePanel>
            <MiddlePanel>
              <MiddleTitle>Control Panel</MiddleTitle>
              <ActionList>
                <ActionRow $selected>
                  <MonitorIcon />
                  <ActionEdit>Add Asset Usage Start</ActionEdit>
                </ActionRow>
                <ActionRow>
                  <MonitorIcon />
                  Edit Asset Usage Start
                </ActionRow>
                <ActionRow $muted>
                  <MonitorIcon />
                  Fixed Assets Settings
                </ActionRow>
              </ActionList>
            </MiddlePanel>
            <TargetPanel>
              <TargetBox>
                <Legend>Target Module</Legend>
                <NameRow $h={18}>
                  <NameLabel>Name:</NameLabel>
                  <NameValue>XAML_OSAIPOK200</NameValue>
                </NameRow>
                <NameRow $h={24}>
                  <NameLabel>Description:</NameLabel>
                  Add/Edit Asset Usage Start Document
                </NameRow>
                <SecurityButton>
                  <LockIcon />
                  Security
                </SecurityButton>
              </TargetBox>
              <TabStrip>
                <Tab $active $w={58}>Settings</Tab>
                <Tab $w={79}>Activity Filter</Tab>
                <Tab $w={117}>Parameter Mappings</Tab>
              </TabStrip>
              <TabPanel>
                <FieldGrid>
                  <FieldLabel>Activation Mode:</FieldLabel>
                  <Combo value="STD" />
                  <FieldLabel>Activation Action:</FieldLabel>
                  <Combo value="INS" />
                  <FieldLabel>Prečac:</FieldLabel>
                  <Combo value="" />
                  <FieldLabel>Text Color:</FieldLabel>
                  <ColorPick>
                    <ColorSwatchBar $color="#000" />
                    <ColorDrop>▼</ColorDrop>
                  </ColorPick>
                </FieldGrid>
                <SpanRow>Begin New G</SpanRow>
                <SettingsGroup>Module Sett</SettingsGroup>
              </TabPanel>
            </TargetPanel>
          </Panels>
          <ModalButtons>
            <ActionButton $w={67} $h={28} $gap={0}>
              Add
              <BlueArrow />
            </ActionButton>
            <ActionButton $w={72} $h={28} $gap={14}>
              <BlueArrow left />
              Remove
            </ActionButton>
            <ActionButton $w={72} $h={25} $gap={267} $start>Save</ActionButton>
            <ActionButton $w={72} $h={25} $gap={118} />
          </ModalButtons>
          <ColorPopup>
            <PopupHeading>Available Colors</PopupHeading>
            <SwatchGrid>
              {AVAILABLE_COLORS.map((c) => (
                <Swatch key={c} $color={c} />
              ))}
            </SwatchGrid>
            <PopupHeading>Standard Colors</PopupHeading>
            <SwatchGrid>
              {STANDARD_COLORS.map((c) => (
                <Swatch key={c} $color={c} />
              ))}
            </SwatchGrid>
            <PopupHeading $mt={1}>Recent Colors</PopupHeading>
          </ColorPopup>
        </ModalBody>
      </Modal>
    </Page>
  );
}
